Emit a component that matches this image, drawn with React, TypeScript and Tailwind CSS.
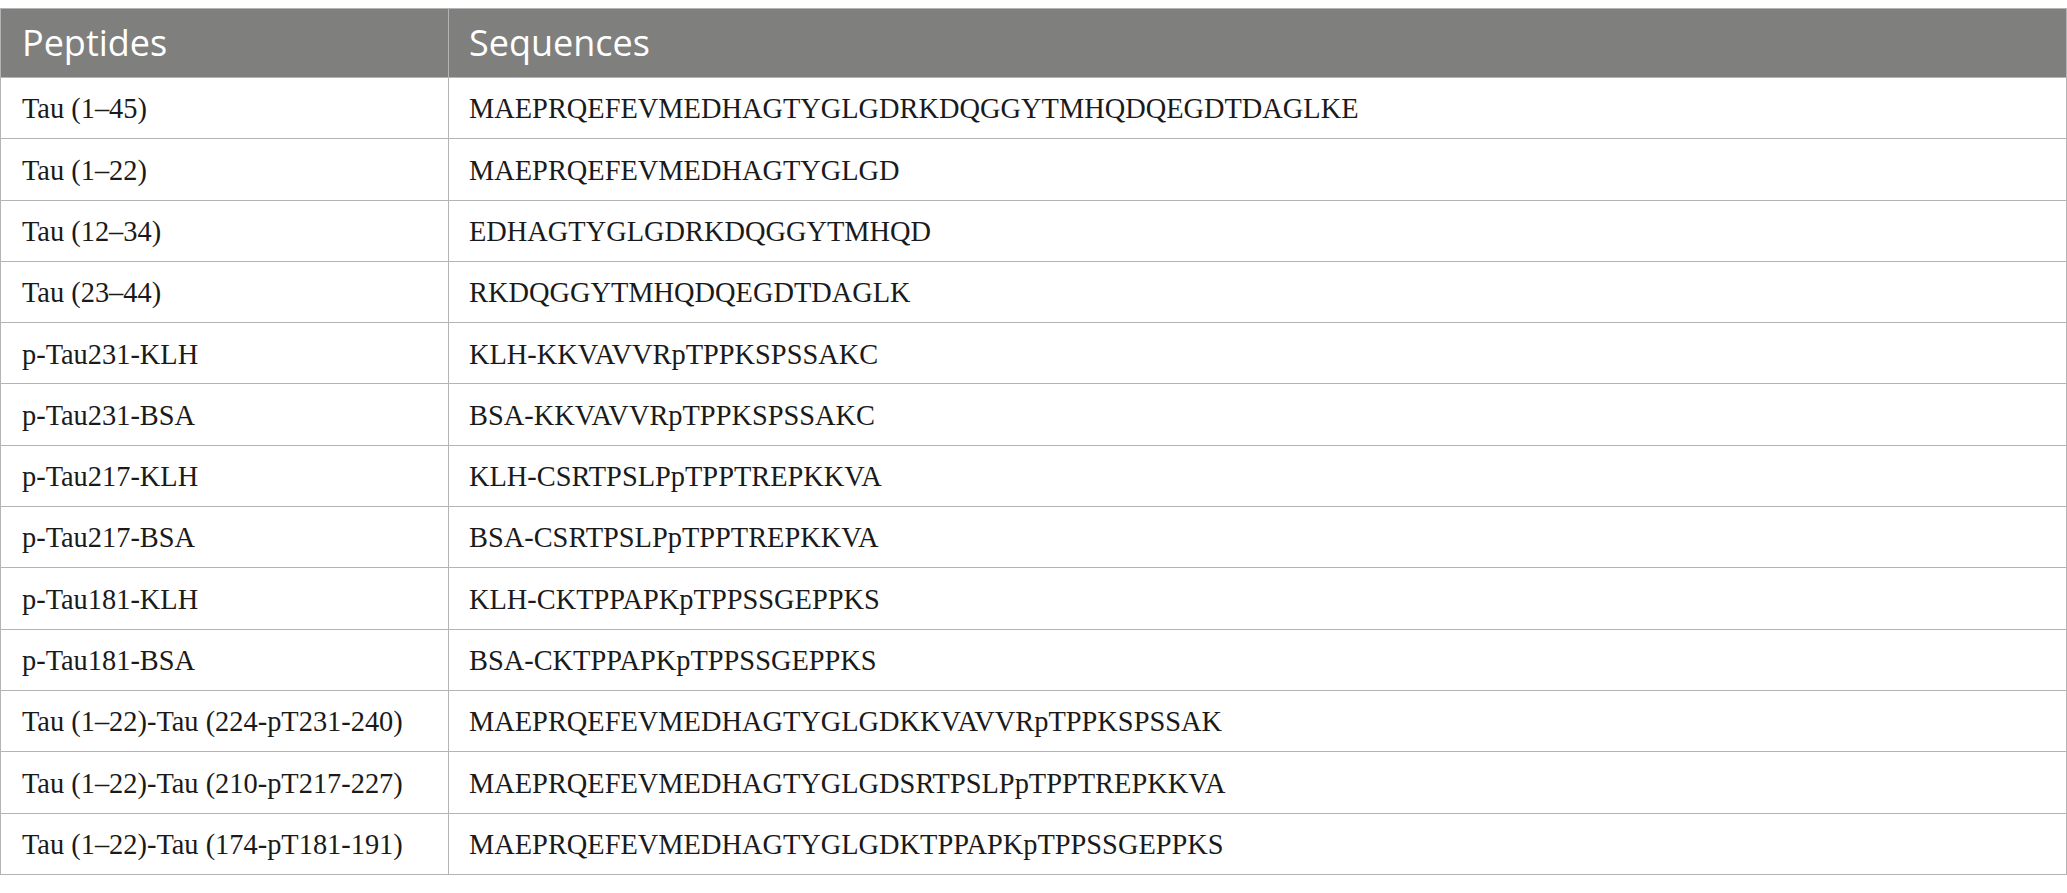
const rows: [string, string][] = [
  ["Tau (1–45)", "MAEPRQEFEVMEDHAGTYGLGDRKDQGGYTMHQDQEGDTDAGLKE"],
  ["Tau (1–22)", "MAEPRQEFEVMEDHAGTYGLGD"],
  ["Tau (12–34)", "EDHAGTYGLGDRKDQGGYTMHQD"],
  ["Tau (23–44)", "RKDQGGYTMHQDQEGDTDAGLK"],
  ["p-Tau231-KLH", "KLH-KKVAVVRpTPPKSPSSAKC"],
  ["p-Tau231-BSA", "BSA-KKVAVVRpTPPKSPSSAKC"],
  ["p-Tau217-KLH", "KLH-CSRTPSLPpTPPTREPKKVA"],
  ["p-Tau217-BSA", "BSA-CSRTPSLPpTPPTREPKKVA"],
  ["p-Tau181-KLH", "KLH-CKTPPAPKpTPPSSGEPPKS"],
  ["p-Tau181-BSA", "BSA-CKTPPAPKpTPPSSGEPPKS"],
  ["Tau (1–22)-Tau (224-pT231-240)", "MAEPRQEFEVMEDHAGTYGLGDKKVAVVRpTPPKSPSSAK"],
  ["Tau (1–22)-Tau (210-pT217-227)", "MAEPRQEFEVMEDHAGTYGLGDSRTPSLPpTPPTREPKKVA"],
  ["Tau (1–22)-Tau (174-pT181-191)", "MAEPRQEFEVMEDHAGTYGLGDKTPPAPKpTPPSSGEPPKS"],
];

export default function App() {
  return (
    <div className="min-h-screen w-full bg-white pt-[8px]">
      <table className="w-[2067px] table-fixed border-collapse">
        <thead>
          <tr className="h-[69px] bg-[#7f807e] text-white">
            <th className="w-[448px] border border-[#b4b4b4] pl-[21px] text-left align-middle font-['Open_Sans',sans-serif] text-[36px] font-normal">
              Peptides
            </th>
            <th className="border border-[#b4b4b4] pl-[20px] text-left align-middle font-['Open_Sans',sans-serif] text-[36px] font-normal">
              Sequences
            </th>
          </tr>
        </thead>
        <tbody className="font-['Liberation_Serif',serif] text-[28.4px] text-[#1a1a1a]">
          {rows.map(([peptide, seq]) => (
            <tr key={peptide} className="h-[61.3px]">
              <td className="border border-[#b4b4b4] pl-[21px] pt-[3px] align-middle">
                {peptide}
              </td>
              <td className="border border-[#b4b4b4] pl-[20px] pt-[3px] align-middle">
                {seq}
              </td>
            </tr>
          ))}
        </tbody>
      </table>
    </div>
  );
}
